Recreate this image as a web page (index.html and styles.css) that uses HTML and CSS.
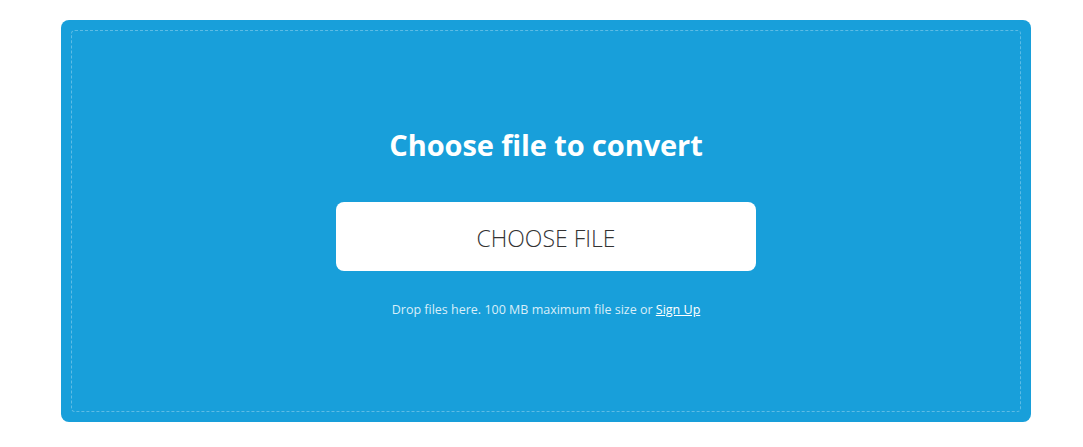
FILE: index.html
```html
<!DOCTYPE html>
<html lang="en">
<head>
    <meta charset="UTF-8">
    <meta name="viewport" content="width=device-width, initial-scale=1.0">
    <title>Choose file to convert</title>
    <link rel="stylesheet" href="styles.css">
</head>
<body>
    <div class="uploader">
        <div class="drop-zone">
            <h2 class="title">Choose file to convert</h2>
            <button class="choose-btn" type="button">CHOOSE FILE</button>
            <p class="note">Drop files here. 100 MB maximum file size or <a href="#">Sign Up</a></p>
        </div>
    </div>
</body>
</html>
```

FILE: styles.css
```css
body {
    font-family: "Open Sans", "Noto Sans", sans-serif;
    background-color: #ffffff;
    margin: 0;
    padding: 20px 52px 0 61px;
}
.uploader {
    background-color: #189fda;
    border-radius: 8px;
    padding: 10px;
    height: 382px;
}
.drop-zone {
    height: 100%;
    box-sizing: border-box;
    border: 1px dashed rgba(255, 255, 255, 0.3);
    border-radius: 4px;
    padding-top: 2px;
    display: flex;
    flex-direction: column;
    align-items: center;
    justify-content: center;
}
.title {
    margin: 0;
    color: #ffffff;
    font-size: 29px;
    font-weight: 700;
    line-height: 36px;
    letter-spacing: -0.1px;
}
.choose-btn {
    margin-top: 39px;
    width: 420px;
    height: 69px;
    padding: 4px 0 0;
    border: none;
    border-radius: 8px;
    background: #ffffff;
    color: #333333;
    font-family: inherit;
    font-size: 23px;
    font-weight: 300;
    cursor: pointer;
}
.note {
    margin: 31px 0 0;
    color: #d8eef9;
    font-size: 12.5px;
    line-height: 16px;
}
.note a {
    color: #ffffff;
}
```
